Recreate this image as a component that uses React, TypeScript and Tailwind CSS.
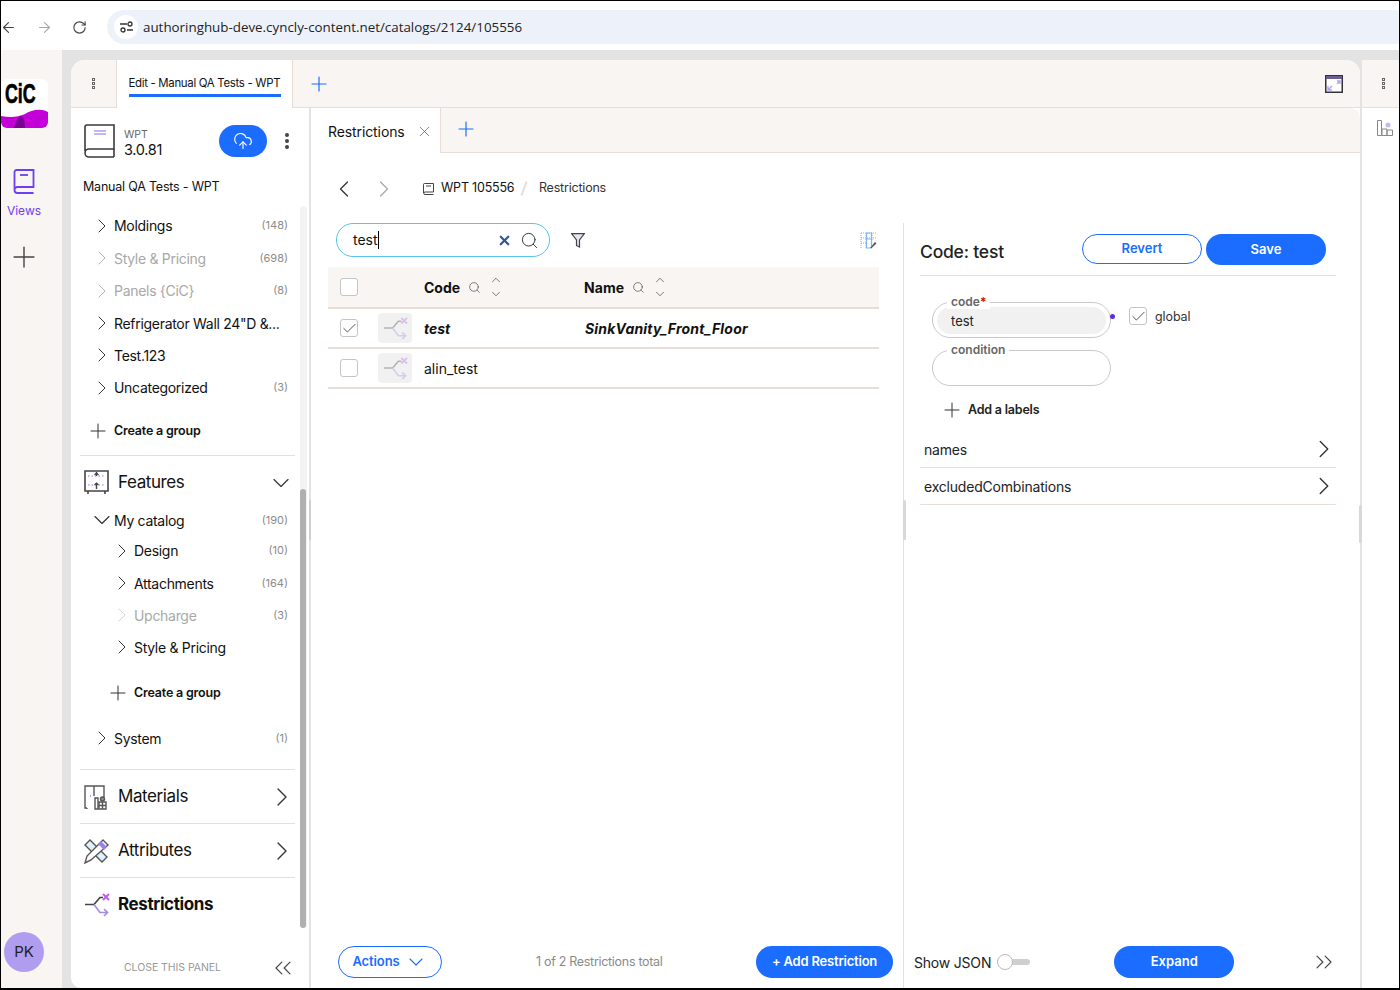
import { ChevronDown, ChevronLeft, ChevronRight, ChevronUp, ChevronsLeft, ChevronsRight, Plus, Search, X, ArrowLeft, ArrowRight, RotateCw, Check, CloudUpload } from 'lucide-react'

function BookIcon({ size = 34 }: { size?: number }) {
  return (
    <svg width={size - 2} height={size} viewBox="0 0 32 34" fill="none" stroke="#3a3a3a" strokeWidth="1.6">
      <path d="M1 27V3a2 2 0 0 1 2-2h27v24H5a4 4 0 0 0-4 4 4 4 0 0 0 4 4h25" />
      <path d="M30 25v8" />
      <path d="M10 7h12M10 10h12" stroke="#8b6cf0" strokeWidth="1.2" />
    </svg>
  )
}

function ViewsIcon() {
  return (
    <svg width="22" height="26" viewBox="0 0 22 26" fill="none" stroke="#6d3ff0" strokeWidth="1.8">
      <path d="M1.5 20V3a2 2 0 0 1 2-2h17v17H4.5a3 3 0 0 0 0 6h16" />
      <path d="M7 6h8" />
    </svg>
  )
}

function RestrictionIcon({ size = 26, faded = false }: { size?: number; faded?: boolean }) {
  return (
    <svg width={size} height={size} viewBox="0 0 26 26" fill="none" strokeWidth="1.7" opacity={faded ? 0.35 : 1}>
      <path d="M1 12.5h9l6-7h3" stroke="#444" />
      <path d="M10 12.5l6 8h7M20 17l3.500 3.500L20 24" stroke="#a78bea" />
      <path d="M19 2l6 6M25 2l-6 6" stroke="#c05cf0" strokeWidth="2" />
    </svg>
  )
}

function FeaturesIcon() {
  return (
    <svg width="26" height="25" viewBox="0 0 26 25" fill="none">
      <path d="M1 1h23v20H1zM4 21v3M21 21v3" stroke="#444" strokeWidth="1.6" />
      <path d="M4 6h17M4 15h17" stroke="#b46cf0" strokeWidth="1.2" strokeDasharray="1.5 2" />
      <path d="M12.500 2v4M12.500 13v6" stroke="#444" strokeWidth="1.4" />
      <path d="M10.500 5l2-2 2 2M10.500 15l2-2 2 2" stroke="#444" strokeWidth="1.2" />
    </svg>
  )
}

function MaterialsIcon() {
  return (
    <svg width="24" height="25" viewBox="0 0 24 25" fill="none" stroke="#555" strokeWidth="1.4">
      <path d="M3 23H1V1h19v11M10 1v10M3 23v1" />
      <path d="M11 13h3v11h-3z" />
      <path d="M15 17h7v7h-7zM18.500 17v7M15 20.500h7" />
      <circle cx="18.500" cy="14" r="2" fill="#8f8f8f" />
      <circle cx="6.500" cy="11" r="0.7" fill="#8b6cf0" stroke="none" />
    </svg>
  )
}

function AttributesIcon() {
  return (
    <svg width="25" height="25" viewBox="0 0 25 25" fill="none" stroke="#555" strokeWidth="1.4">
      <path d="M6 1L1 6l17 17 5-5z" fill="#dff1fb" />
      <path d="M19 1l5 5L7 21l-6 3 2-7z" fill="#fff" />
      <path d="M17 3l5 5-2 2-5-5z" fill="#9b7ff0" stroke="#9b7ff0" />
    </svg>
  )
}

function GripDots() {
  return (
    <span className="flex flex-col gap-[1px]">
      <i className="h-[3px] w-[3px] border border-[#666]" />
      <i className="h-[3px] w-[3px] border border-[#666]" />
      <i className="h-[3px] w-[3px] border border-[#666]" />
    </span>
  )
}

function TreeRow({ label, count, muted, expanded, indent, faint, height }: { label: string; count?: string; muted?: boolean; expanded?: boolean; indent?: boolean; faint?: boolean; height: string }) {
  return (
    <div className={`flex items-center pr-[12px] ${height} ${indent ? 'pl-[30px]' : 'pl-[10px]'}`}>
      {expanded ? (
        <ChevronDown size={28} strokeWidth={1} className="-mx-[2px] shrink-0 text-[#333]" />
      ) : (
        <ChevronRight size={24} strokeWidth={1} className={`shrink-0 ${faint ? 'text-[#d5d5d5]' : muted ? 'text-[#b5b5b5]' : 'text-[#333]'}`} />
      )}
      <span className={`flex-1 whitespace-nowrap text-[14px] tracking-[-0.3px] ${muted ? 'text-[#a8a8a8]' : 'text-[#111]'}`}>{label}</span>
      {count && <span className="text-[11px] text-[#8b8b8b]">{count}</span>}
    </div>
  )
}

function CreateGroup({ inset }: { inset?: boolean }) {
  return (
    <div className={`flex items-center gap-[4px] text-[12.5px] font-semibold tracking-[-0.2px] text-[#111] ${inset ? 'pl-[26px]' : 'pl-[6px]'}`}>
      <Plus size={24} strokeWidth={1} className="text-[#333]" />
      Create a group
    </div>
  )
}

function SectionRow({ icon, label, bold, chevron }: { icon: React.ReactNode; label: string; bold?: boolean; chevron?: boolean }) {
  return (
    <div className="flex h-[53px] items-center pl-[4px] pt-[1px]">
      <span className="flex w-[34px] justify-start">{icon}</span>
      <span className={`flex-1 text-[17px] tracking-[-0.4px] text-[#111] ${bold ? 'font-bold' : ''}`}>{label}</span>
      {chevron && <ChevronRight size={32} strokeWidth={1} className="-mr-[3px] text-[#333]" />}
    </div>
  )
}

function CheckBox({ checked }: { checked?: boolean }) {
  return (
    <span className="flex h-[18px] w-[18px] items-center justify-center rounded-[3px] border border-[#c4c4c4] bg-white">
      {checked && <Check size={17} strokeWidth={1} className="shrink-0 text-[#111]" />}
    </span>
  )
}

function Sorter() {
  return (
    <span className="ml-[8px] flex flex-col text-[#333]">
      <ChevronUp size={14} strokeWidth={1.1} />
      <ChevronDown size={14} strokeWidth={1.1} />
    </span>
  )
}

function TableRow({ code, name, active }: { code: string; name?: string; active?: boolean }) {
  return (
    <div className="flex h-[40px] items-center border-b-2 border-[#e8ddd7]">
      <span className="ml-[12px]"><CheckBox checked={active} /></span>
      <span className="ml-[20px] flex h-[30px] w-[34px] items-center justify-center rounded-[4px] bg-[#f1f1f1]">
        <RestrictionIcon size={25} faded />
      </span>
      <span className={`ml-[12px] w-[161px] text-[14px] text-[#111] ${active ? 'font-bold italic' : ''}`}>{code}</span>
      {name && <span className="text-[14px] font-bold italic tracking-[0.2px] text-[#111]">{name}</span>}
    </div>
  )
}

function Accordion({ label }: { label: string }) {
  return (
    <div className="flex h-[37px] items-center justify-between border-b border-[#e8ddd7] pl-[4px] text-[14px] tracking-[-0.2px] text-[#222]">
      {label}
      <ChevronRight size={30} strokeWidth={1.1} className="-mr-[3px] text-[#333]" />
    </div>
  )
}

export default function App() {
  return (
    <div className="flex h-[990px] w-[1400px] flex-col overflow-hidden border border-b-2 border-black bg-[#e3e3e3] font-['Inter',sans-serif] text-[#111]">
      {/* Browser bar */}
      <div className="flex h-[49px] shrink-0 items-center bg-white pt-[3px]">
        <ArrowLeft size={17} strokeWidth={1.6} className="ml-[-1px] text-[#444]" />
        <ArrowRight size={17} strokeWidth={1.6} className="ml-[19px] text-[#a8a8a8]" />
        <RotateCw size={15} strokeWidth={1.8} className="ml-[19px] text-[#444]" />
        <div className="ml-[20px] flex h-[34px] flex-1 items-center rounded-l-full bg-[#edf2fa] pl-[7px] font-['Open_Sans',sans-serif] text-[13.37px] text-[#222]">
          <span className="flex h-[24px] w-[24px] items-center justify-center rounded-full bg-white">
            <svg width="15" height="12" viewBox="0 0 15 12" fill="none" stroke="#333" strokeWidth="1.3">
              <path d="M1 3h7M8 9h6" />
              <circle cx="11" cy="3" r="2" />
              <circle cx="4" cy="9" r="2" />
            </svg>
          </span>
          <span className="ml-[5px]">authoringhub-deve.cyncly-content.net/catalogs/2124/105556</span>
        </div>
      </div>

      <div className="flex min-h-0 flex-1">
        {/* Left rail */}
        <div className="flex w-[61px] shrink-0 flex-col items-start bg-[#f8f5f2]">
          <div className="relative mt-[29px] h-[49px] w-[47px] overflow-hidden rounded-[6px] bg-white">
            <span className="absolute left-[4px] top-[0px] origin-left scale-x-[.66] font-['Liberation_Sans',sans-serif] text-[27px] font-bold leading-[30px] text-black [-webkit-text-stroke:0.7px_black]">CiC</span>
            <svg className="absolute bottom-0 left-0" width="47" height="19" viewBox="0 0 47 19">
              <path d="M0 7c10 2 17 1 24-2 6-4 16-6 23-2v16H0z" fill="#c400d8" />
              <path d="M13 19c1-7 5-12 7-12 3 1 4 7 4 12z" fill="#7d0095" />
            </svg>
          </div>
          <div className="mt-[41px] flex w-[46px] flex-col items-center text-[12px] text-[#6d3ff0]">
            <ViewsIcon />
            <span className="mt-[7px]">Views</span>
          </div>
          <Plus size={34} strokeWidth={1} className="ml-[6px] mt-[20px] text-[#444]" />
          <div className="ml-[3px] mt-auto mb-[16px] flex h-[40px] w-[40px] items-center justify-center rounded-full bg-[#b09df0] text-[15px] text-[#222]">PK</div>
        </div>

        {/* Workspace */}
        <div className="ml-[9px] mt-[10px] flex min-w-0 w-[1289px] shrink-0 flex-col overflow-hidden rounded-t-[14px] rounded-bl-[10px] bg-white">
          {/* Top tabs */}
          <div className="flex h-[48px] shrink-0 items-stretch border-b border-[#e8ddd7] bg-[#f8f5f2]">
            <div className="flex w-[45px] items-center justify-center">
              <GripDots />
            </div>
            <div className="relative -mb-px flex w-[177px] justify-center border-x border-[#e8ddd7] bg-white pt-[15px] text-[11.4px] tracking-[-0.3px]">
              <span className="h-[22px] w-[152px] whitespace-nowrap border-b-[3px] border-[#1a6dff] leading-[16px]">Edit - Manual QA Tests - WPT</span>
            </div>
            <Plus size={24} strokeWidth={1.2} className="ml-[14px] self-center text-[#1a6dff]" />
            <svg className="ml-auto mr-[17px] self-center" width="18" height="18" viewBox="0 0 18 18">
              <rect x="0.75" y="0.75" width="16.5" height="16.5" fill="#fff" stroke="#333" strokeWidth="1.5" />
              <rect x="1" y="1" width="16" height="3" fill="#6b5e94" />
              <path d="M3 15l4-4M3 11v4h4M15 6l-3 3M15 9V6h-3" stroke="#b7a4f0" strokeWidth="1.4" fill="none" />
            </svg>
          </div>

          <div className="flex min-h-0 flex-1">
            {/* Sidebar */}
            <div className="relative w-[240px] shrink-0 border-r-2 border-[#e3e3e3] px-[9px]">
              <div className="flex h-[62px] items-center pl-[4px] pt-[4px]">
                <BookIcon />
                <div className="ml-[8px] mt-[4px] flex flex-col">
                  <span className="text-[10.5px] leading-[13px] text-[#666]">WPT</span>
                  <span className="text-[14.5px] leading-[18px] tracking-[-0.3px]">3.0.81</span>
                </div>
                <div className="ml-auto mr-[33px] flex h-[32px] w-[48px] items-center justify-center rounded-full bg-[#1a6dff] text-white">
                  <CloudUpload size={20} strokeWidth={1.4} />
                </div>
                <span className="absolute left-[214px] top-[25px] flex flex-col gap-[2px]">
                  <i className="h-[4px] w-[4px] rounded-full bg-[#444]" /><i className="h-[4px] w-[4px] rounded-full bg-[#444]" /><i className="h-[4px] w-[4px] rounded-full bg-[#444]" />
                </span>
              </div>
              <div className="mt-[9px] pl-[3px] text-[12.5px] leading-[16px] tracking-[-0.2px]">Manual QA Tests - WPT</div>

              <div className="mt-[14px]">
                <TreeRow label="Moldings" count="(148)" height="h-[33px]" />
                <TreeRow label="Style & Pricing" count="(698)" muted height="h-[32px]" />
                <TreeRow label="Panels {CiC}" count="(8)" muted height="h-[33px]" />
                <TreeRow label='Refrigerator Wall 24"D &...' height="h-[32px]" />
                <TreeRow label="Test.123" height="h-[32px]" />
                <TreeRow label="Uncategorized" count="(3)" height="h-[33px]" />
              </div>
              <div className="mt-[15px]"><CreateGroup /></div>

              <div className="mt-[12px] mr-[5px] border-t border-[#e8ddd7]">
                <div className="flex h-[53px] items-center pl-[4px]">
                  <span className="flex w-[34px]"><FeaturesIcon /></span>
                  <span className="flex-1 text-[17px] tracking-[-0.4px]">Features</span>
                  <ChevronDown size={28} strokeWidth={1} className="text-[#333]" />
                </div>
              </div>
              <div className="mt-[-3px]">
                <TreeRow label="My catalog" count="(190)" expanded height="h-[28px]" />
                <TreeRow label="Design" count="(10)" indent muted-chevron="" height="h-[33px]" {...({} as object)} />
                <TreeRow label="Attachments" count="(164)" indent height="h-[32px]" />
                <TreeRow label="Upcharge" count="(3)" indent muted faint height="h-[32px]" />
                <TreeRow label="Style & Pricing" indent height="h-[32px]" />
              </div>
              <div className="mt-[18px]"><CreateGroup inset /></div>
              <div className="mt-[17px]"><TreeRow label="System" count="(1)" height="h-[32px]" /></div>

              <div className="mr-[5px] mt-[15px] border-t border-[#e8ddd7]">
                <SectionRow icon={<MaterialsIcon />} label="Materials" chevron />
              </div>
              <div className="mr-[5px] border-t border-[#e8ddd7]">
                <SectionRow icon={<AttributesIcon />} label="Attributes" chevron />
              </div>
              <div className="mr-[5px] border-t border-[#e8ddd7]">
                <SectionRow icon={<RestrictionIcon />} label="Restrictions" bold />
              </div>

              <div className="absolute bottom-[6px] left-[53px] flex w-[173px] items-center justify-between text-[10.5px] tracking-[-0.05px] text-[#999]">
                CLOSE THIS PANEL
                <ChevronsLeft size={28} strokeWidth={1} className="text-[#444]" />
              </div>

              {/* scrollbar */}
              <div className="absolute right-[2px] top-[98px] h-[722px] w-[7px] rounded-full bg-[#f3f3f3]">
                <div className="ml-0 mt-[283px] h-[439px] w-[6px] rounded-full bg-[#b0b0b0]" />
              </div>
              {/* column handle */}
              <span className="absolute -right-[2px] top-[392px] h-[40px] w-[2px] rounded-full bg-[#cfcfcf]" />
            </div>

            {/* Content */}
            <div className="flex min-w-0 flex-1 flex-col">
              <div className="flex h-[45px] shrink-0 items-stretch rounded-tr-[10px] border-b border-[#e8ddd7] bg-[#f8f5f2]">
                <div className="-mb-px flex w-[130px] items-center border-r border-[#e8ddd7] bg-white pl-[17px] pt-[1px] text-[14px] tracking-[-0.1px]">
                  Restrictions
                  <X size={17} strokeWidth={1} className="ml-[11px] text-[#555]" />
                </div>
                <Plus size={24} strokeWidth={1.2} className="ml-[13px] mt-[9px] text-[#1a6dff]" />
              </div>

              {/* Breadcrumb */}
              <div className="flex h-[70px] shrink-0 items-center pl-[19px] pt-[1px]">
                <ChevronLeft size={28} strokeWidth={1.1} className="text-[#333]" />
                <ChevronRight size={28} strokeWidth={1.1} className="ml-[12px] text-[#aaa]" />
                <svg className="ml-[25px]" width="11" height="12" viewBox="0 0 11 12" fill="none" stroke="#444" strokeWidth="1">
                  <path d="M.5 10V1.500a1 1 0 0 1 1-1h9v8.500H2a1.250 1.250 0 0 0 0 2.500h8.500" />
                  <path d="M3 3h5" />
                </svg>
                <span className="ml-[7px] text-[12.5px] tracking-[-0.2px]">WPT 105556</span>
                <span className="ml-[9px] h-[15px] w-[1.5px] rotate-[20deg] bg-[#e8ddd7]" />
                <span className="ml-[14px] text-[12.5px] tracking-[-0.2px] text-[#333]">Restrictions</span>
              </div>

              <div className="relative flex min-h-0 flex-1">
                {/* List column */}
                <div className="flex w-[593px] shrink-0 flex-col border-r border-[#e8ddd7]">
                  <div className="flex h-[34px] shrink-0 items-center pl-[25px]">
                    <div className="flex h-[34px] w-[214px] items-center rounded-full border border-[#55c4ee] pl-[16px] pr-[10px] text-[14px]">
                      <span className="border-r border-black pr-0 leading-[18px]">test</span>
                      <X size={15} strokeWidth={3.5} className="ml-auto text-[#2f5597]" />
                      <Search size={19} strokeWidth={1.2} className="ml-[8px] text-[#333]" />
                    </div>
                    <svg className="ml-[21px]" width="14" height="15" viewBox="0 0 14 15" fill="none" stroke="#444" strokeWidth="1.2">
                      <path d="M.6.6h12.800L8.500 7v7L5.500 12.500V7z" fill="#e8e3f8" />
                    </svg>
                    <svg className="ml-auto mr-[26px]" width="17" height="17" viewBox="0 0 17 17" fill="none">
                      <path d="M1 1h15M1 1v15M6 1v15M12 1v7M1 6h15M1 11h5" stroke="#999" strokeWidth="0.8" strokeDasharray="1 1" />
                      <path d="M6.500 1h5v15h-5z M6.500 7h5" stroke="#7db7f5" strokeWidth="1.200" />
                      <path d="M10 16l5-6 1.500 1.500-5 4.500z" fill="#555" />
                    </svg>
                  </div>

                  <div className="ml-[17px] mr-[24px] mt-[10px] flex h-[42px] shrink-0 items-center border-b-2 border-[#e8ddd7] bg-[#f8f5f2]">
                    <span className="ml-[12px]"><CheckBox /></span>
                    <span className="ml-[66px] text-[14px] font-bold">Code</span>
                    <Search size={13} strokeWidth={1.2} className="ml-[8px] text-[#444]" />
                    <Sorter />
                    <span className="ml-[81px] text-[14px] font-bold">Name</span>
                    <Search size={13} strokeWidth={1.2} className="ml-[8px] text-[#444]" />
                    <Sorter />
                  </div>
                  <div className="ml-[17px] mr-[24px]">
                    <TableRow code="test" name="SinkVanity_Front_Floor" active />
                    <TableRow code="alin_test" />
                  </div>

                  <div className="mt-auto mb-[10px] flex h-[32px] shrink-0 items-center pl-[27px] pr-[10px]">
                    <div className="flex h-[32px] w-[104px] items-center justify-center gap-[4px] rounded-full border border-[#1a6dff] text-[13px] font-semibold tracking-[-0.1px] text-[#1a6dff]">
                      Actions
                      <ChevronDown size={24} strokeWidth={1.1} />
                    </div>
                    <span className="ml-[94px] text-[12.5px] tracking-[-0.3px] text-[#8a8a8a]">1 of 2 Restrictions total</span>
                    <div className="ml-auto flex h-[32px] w-[137px] items-center justify-center rounded-full bg-[#1a6dff] text-[13px] font-semibold tracking-[-0.2px] text-white">
                      + Add Restriction
                    </div>
                  </div>
                </div>

                {/* Detail column */}
                <div className="flex min-w-0 flex-1 flex-col pt-[11px]">
                  <div className="ml-[16px] mr-[24px] flex h-[42px] shrink-0 items-start justify-between border-b border-[#e8ddd7] pr-[10px]">
                    <span className="mt-[5px] text-[17.5px] font-medium tracking-[-0.2px] text-[#222]">Code: test</span>
                    <div className="flex gap-[4px]">
                      <span className="flex h-[30px] w-[120px] items-center justify-center rounded-full border border-[#1a6dff] text-[13px] font-semibold text-[#1a6dff]">Revert</span>
                      <span className="flex h-[31px] w-[120px] items-center justify-center rounded-full bg-[#1a6dff] text-[13px] font-semibold text-white">Save</span>
                    </div>
                  </div>

                  <div className="ml-[28px] mt-[26px] flex">
                    <div className="relative h-[36px] w-[179px] rounded-[18px] border border-[#c9c9c9] p-[4px]">
                      <span className="absolute -top-[9px] left-[14px] bg-white px-[4px] text-[12px] font-semibold leading-[15px] text-[#666]">
                        code<span className="text-[#e00000]">*</span>
                      </span>
                      <div className="flex h-[27px] items-center rounded-[14px] bg-[#f1f1f1] pl-[14px] pt-[2px] text-[13px] text-[#222]">test</div>
                      <span className="absolute -right-[5px] top-[11px] h-[5px] w-[5px] rounded-full bg-[#5b2ee0]" />
                    </div>
                    <span className="ml-[18px] mt-[5px]"><CheckBox checked /></span>
                    <span className="ml-[8px] mt-[6px] text-[12.5px] tracking-[-0.1px] text-[#333]">global</span>
                  </div>

                  <div className="relative ml-[28px] mt-[12px] h-[36px] w-[179px] rounded-[18px] border border-[#c9c9c9]">
                    <span className="absolute -top-[9px] left-[14px] bg-white px-[4px] text-[12px] font-semibold leading-[15px] text-[#666]">condition</span>
                  </div>

                  <div className="ml-[36px] mt-[12px] flex items-center gap-[4px] text-[12.5px] font-semibold tracking-[-0.2px] text-[#222]">
                    <Plus size={24} strokeWidth={1} className="text-[#333]" />
                    Add a labels
                  </div>

                  <div className="ml-[16px] mr-[24px] mt-[9px]">
                    <Accordion label="names" />
                    <Accordion label="excludedCombinations" />
                  </div>

                  <div className="mt-auto mb-[10px] flex h-[32px] shrink-0 items-center pl-[10px] pr-[22px]">
                    <span className="text-[14px] tracking-[-0.2px] text-[#222]">Show JSON</span>
                    <span className="relative ml-[6px] h-[6px] w-[33px] rounded-full bg-[#cfcfcf]">
                      <i className="absolute -top-[5px] left-0 h-[16px] w-[16px] rounded-full border border-[#bbb] bg-white" />
                    </span>
                    <span className="ml-[84px] flex h-[32px] w-[120px] items-center justify-center rounded-full bg-[#1a6dff] text-[13px] font-semibold text-white">Expand</span>
                    <ChevronsRight size={28} strokeWidth={1} className="ml-auto text-[#444]" />
                  </div>
                </div>

                {/* column handle */}
                <span className="absolute left-[592px] top-[277px] h-[40px] w-[3px] rounded-full bg-[#d8d8d8]" />
              </div>
            </div>
          </div>
        </div>

        {/* Right collapsed panel */}
        <div className="relative ml-[2px] mt-[10px] flex min-w-0 flex-1 flex-col rounded-tl-[10px] bg-white">
          <span className="absolute -left-[3px] top-[445px] h-[38px] w-[3px] rounded-full bg-[#d8d8d8]" />
          <div className="flex h-[48px] items-center border-b border-[#e8ddd7] bg-[#f8f5f2] pl-[20px]">
            <GripDots />
          </div>
          <svg className="ml-[15px] mt-[12px]" width="16" height="16" viewBox="0 0 16 16" fill="none" stroke="#888" strokeWidth="1">
            <path d="M.500.500h4v15h-4zM5 9h5v6.500H5zM10 10h5.500v5.500H10z" />
            <circle cx="11" cy="5" r="2.500" fill="#c9b8f0" stroke="none" />
          </svg>
        </div>
      </div>
    </div>
  )
}
